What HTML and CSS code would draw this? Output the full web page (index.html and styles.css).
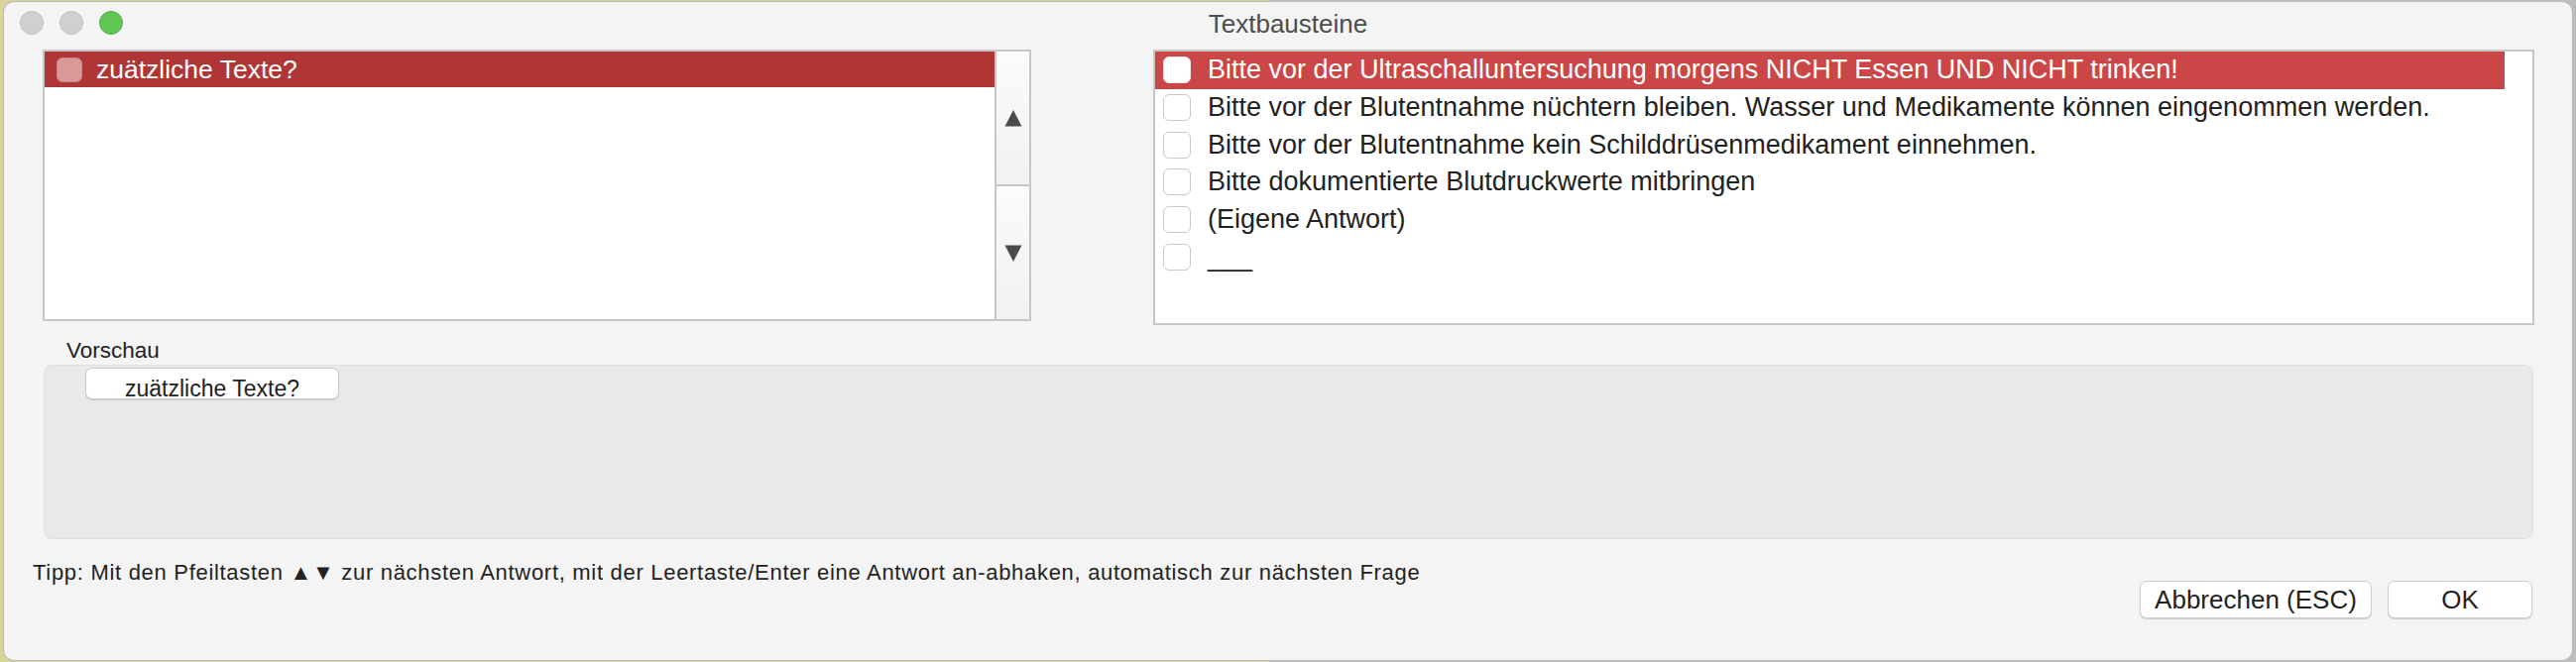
FILE: index.html
```html
<!DOCTYPE html>
<html lang="de">
<head>
<meta charset="utf-8">
<title>Textbausteine</title>
<link rel="stylesheet" href="styles.css">
</head>
<body>
<div class="window">
  <div class="titlebar">
    <div class="lights">
      <span class="light gray"></span>
      <span class="light gray"></span>
      <span class="light green"></span>
    </div>
    <div class="title">Textbausteine</div>
    <div class="spacer"></div>
  </div>

  <div class="lists">
    <div class="qbox">
      <div class="qlist">
        <div class="qrow sel"><span class="cb cb-q"></span><span class="qtext">zuätzliche Texte?</span></div>
      </div>
      <div class="scroller">
        <div class="sbtn">
          <svg class="arrow" width="20" height="19" viewBox="0 0 20 19"><path d="M10 1 L18.5 17.5 L1.5 17.5 Z" fill="#4b4b4b"/></svg>
        </div>
        <div class="sbtn">
          <svg class="arrow" width="20" height="19" viewBox="0 0 20 19"><path d="M1.5 1.5 L18.5 1.5 L10 18 Z" fill="#4b4b4b"/></svg>
        </div>
      </div>
    </div>

    <div class="abox">
      <div class="arow sel"><span class="cb cb-white"></span><span>Bitte vor der Ultraschalluntersuchung morgens NICHT Essen UND NICHT trinken!</span></div>
      <div class="arow"><span class="cb"></span><span>Bitte vor der Blutentnahme nüchtern bleiben. Wasser und Medikamente können eingenommen werden.</span></div>
      <div class="arow"><span class="cb"></span><span>Bitte vor der Blutentnahme kein Schilddrüsenmedikament einnehmen.</span></div>
      <div class="arow"><span class="cb"></span><span>Bitte dokumentierte Blutdruckwerte mitbringen</span></div>
      <div class="arow"><span class="cb"></span><span>(Eigene Antwort)</span></div>
      <div class="arow"><span class="cb"></span><span>___</span></div>
    </div>
  </div>

  <div class="preview-label">Vorschau</div>
  <div class="preview">
    <div class="chip">zuätzliche Texte?</div>
  </div>

  <div class="footer">
    <div class="tip">Tipp: Mit den Pfeiltasten ▲▼ zur nächsten Antwort, mit der Leertaste/Enter eine Antwort an-abhaken, automatisch zur nächsten Frage</div>
    <div class="buttons">
      <button class="btn btn-cancel">Abbrechen (ESC)</button>
      <button class="btn btn-ok">OK</button>
    </div>
  </div>
</div>
</body>
</html>
```

FILE: styles.css
```css
* { box-sizing: border-box; }

html, body {
  margin: 0;
  padding: 0;
}

body {
  width: 2598px;
  height: 668px;
  overflow: hidden;
  background: linear-gradient(to right, #d8d49a 0, #d8d49a 1280px, #bdbdbd 1280px);
  font-family: "Liberation Sans", Arial, Helvetica, sans-serif;
  color: #222;
}

.window {
  margin: 2px 0 0 4px;
  width: 2590px;
  height: 664px;
  background: #f4f4f4;
  border-radius: 10px;
  box-shadow: 0 0 0 1px #b9b9b9;
  overflow: hidden;
}

/* ---------- title bar ---------- */
.titlebar {
  height: 48px;
  display: grid;
  grid-template-columns: 1fr auto 1fr;
  align-items: start;
}

.lights {
  display: flex;
  gap: 16px;
  padding: 9px 0 0 16px;
}

.light {
  width: 24px;
  height: 24px;
  border-radius: 50%;
}

.light.gray {
  background: #d0d0d0;
  border: 1px solid #bcbcbc;
}

.light.green {
  background: #62c655;
  border: 1px solid #54ad49;
}

.title {
  padding-top: 7px;
  font-size: 26px;
  line-height: 30px;
  color: #4d4d4d;
}

/* ---------- lists ---------- */
.lists {
  display: flex;
  align-items: flex-start;
  gap: 123px;
  padding-left: 39px;
  height: 278px;
}

.qbox {
  width: 997px;
  height: 274px;
  border: 2px solid #c6c6c6;
  background: #fff;
  display: flex;
}

.qlist {
  flex: 1;
}

.qrow {
  height: 36px;
  display: flex;
  align-items: center;
  padding-left: 12px;
  gap: 14px;
  font-size: 26.5px;
}

.qrow.sel {
  background: #b03535;
  color: #fff;
}

.cb {
  flex: none;
  width: 28px;
  height: 27px;
  border-radius: 6px;
  border: 1.5px solid #c9c9c9;
  background: #fff;
}

.cb-q {
  width: 26px;
  height: 25px;
  background: #d99999;
  border-color: #c98484;
}

.cb-white {
  border-color: #e9e9e9;
}

.scroller {
  width: 35px;
  border-left: 2px solid #c6c6c6;
  display: flex;
  flex-direction: column;
}

.sbtn {
  flex: 1;
  display: flex;
  align-items: center;
  justify-content: center;
  background: linear-gradient(to bottom, #fbfbfb, #f1f1f1);
}

.sbtn + .sbtn {
  border-top: 2px solid #c6c6c6;
}

.arrow {
  filter: blur(0.5px);
}

.abox {
  width: 1393px;
  height: 278px;
  border: 2px solid #c6c6c6;
  background: #fff;
}

.arow {
  width: 1361px;
  height: 37.7px;
  display: flex;
  align-items: center;
  padding-left: 8px;
  gap: 17px;
  font-size: 27px;
  color: #222;
}

.arow.sel {
  background: #cb4747;
  color: #fff;
}

/* ---------- preview ---------- */
.preview-label {
  margin: 13px 0 0 63px;
  font-size: 22.5px;
  line-height: 26px;
  color: #222;
}

.preview {
  margin: 1px 0 0 40px;
  width: 2511px;
  height: 176px;
  background: #e9e9e9;
  border: 1px solid #e1e1e1;
  border-radius: 8px;
  padding: 2px 0 0 41px;
}

.chip {
  width: 256px;
  height: 32px;
  background: #fff;
  border: 1px solid #c9c9c9;
  border-radius: 7px;
  box-shadow: 0 1px 1px rgba(0, 0, 0, 0.12);
  text-align: center;
  padding-top: 8px;
  font-size: 23px;
  line-height: 24px;
  color: #222;
}

/* ---------- footer ---------- */
.footer {
  margin-top: 21px;
  display: flex;
  justify-content: space-between;
  align-items: flex-start;
  padding: 0 40px 0 29px;
}

.tip {
  font-size: 22px;
  line-height: 26px;
  letter-spacing: 0.7px;
  color: #222;
}

.buttons {
  display: flex;
  gap: 16px;
  margin-top: 21px;
}

.btn {
  height: 38px;
  background: #fff;
  border: 1px solid #cdcdcd;
  border-radius: 7px;
  box-shadow: 0 1px 1px rgba(0, 0, 0, 0.18);
  font-family: "Liberation Sans", Arial, Helvetica, sans-serif;
  font-size: 26px;
  color: #222;
  padding: 0;
}

.btn-cancel {
  width: 234px;
}

.btn-ok {
  width: 146px;
}
```
